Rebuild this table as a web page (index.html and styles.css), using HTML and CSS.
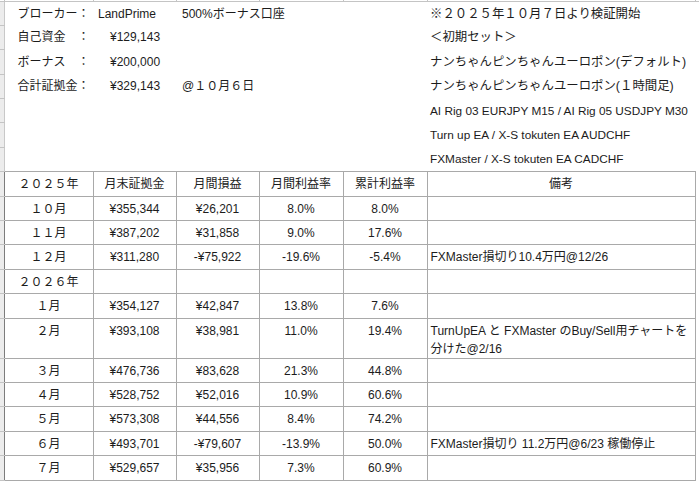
FILE: index.html
```html
<!DOCTYPE html>
<html lang="ja">
<head>
<meta charset="utf-8">
<title>検証記録</title>
<link rel="stylesheet" href="styles.css">
</head>
<body>
<table class="sheet">
  <colgroup>
    <col class="c-a"><col class="c-b"><col class="c-c"><col class="c-d"><col class="c-e"><col class="c-f"><col class="c-g"><col class="c-h">
  </colgroup>
  <tr class="r-top"><td class="a"></td><td></td><td></td><td></td><td></td><td></td><td></td><td class="h"></td></tr>
  <tr class="r-info"><td class="a"></td><td class="lbl">ブローカー：</td><td class="v1">LandPrime</td><td class="v2">500%ボーナス口座</td><td></td><td></td><td class="note">※２０２５年１０月７日より検証開始</td><td class="h"></td></tr>
  <tr class="r-info"><td class="a"></td><td class="lbl">自己資金　：</td><td class="v3">¥129,143</td><td></td><td></td><td></td><td class="note">＜初期セット＞</td><td class="h"></td></tr>
  <tr class="r-info"><td class="a"></td><td class="lbl">ボーナス　：</td><td class="v3">¥200,000</td><td></td><td></td><td></td><td class="note">ナンちゃんピンちゃんユーロポン(デフォルト)</td><td class="h"></td></tr>
  <tr class="r-info"><td class="a"></td><td class="lbl">合計証拠金：</td><td class="v3">¥329,143</td><td class="v2">@１０月６日</td><td></td><td></td><td class="note">ナンちゃんピンちゃんユーロポン(１時間足)</td><td class="h"></td></tr>
  <tr class="r-info"><td class="a"></td><td></td><td></td><td></td><td></td><td></td><td class="note latin">AI Rig 03 EURJPY M15 / AI Rig 05 USDJPY M30</td><td class="h"></td></tr>
  <tr class="r-info"><td class="a"></td><td></td><td></td><td></td><td></td><td></td><td class="note latin">Turn up EA / X-S tokuten EA AUDCHF</td><td class="h"></td></tr>
  <tr class="r-info"><td class="a"></td><td></td><td></td><td></td><td></td><td></td><td class="note latin">FXMaster / X-S tokuten EA CADCHF</td><td class="h"></td></tr>

  <tr class="r-data"><td class="a"></td><td class="d">２０２５年</td><td class="d">月末証拠金</td><td class="d">月間損益</td><td class="d">月間利益率</td><td class="d">累計利益率</td><td class="d">備考</td><td class="h"></td></tr>
  <tr class="r-data"><td class="a"></td><td class="d">１０月</td><td class="d">¥355,344</td><td class="d">¥26,201</td><td class="d">8.0%</td><td class="d">8.0%</td><td class="d memo"></td><td class="h"></td></tr>
  <tr class="r-data"><td class="a"></td><td class="d">１１月</td><td class="d">¥387,202</td><td class="d">¥31,858</td><td class="d">9.0%</td><td class="d">17.6%</td><td class="d memo"></td><td class="h"></td></tr>
  <tr class="r-data"><td class="a"></td><td class="d">１２月</td><td class="d">¥311,280</td><td class="d">-¥75,922</td><td class="d">-19.6%</td><td class="d">-5.4%</td><td class="d memo">FXMaster損切り10.4万円@12/26</td><td class="h"></td></tr>
  <tr class="r-data"><td class="a"></td><td class="d">２０２６年</td><td class="d"></td><td class="d"></td><td class="d"></td><td class="d"></td><td class="d memo"></td><td class="h"></td></tr>
  <tr class="r-data"><td class="a"></td><td class="d">１月</td><td class="d">¥354,127</td><td class="d">¥42,847</td><td class="d">13.8%</td><td class="d">7.6%</td><td class="d memo"></td><td class="h"></td></tr>
  <tr class="r-data r-tall"><td class="a"></td><td class="d">２月</td><td class="d">¥393,108</td><td class="d">¥38,981</td><td class="d">11.0%</td><td class="d">19.4%</td><td class="d memo">TurnUpEA と FXMaster のBuy/Sell用チャートを<br>分けた@2/16</td><td class="h"></td></tr>
  <tr class="r-data"><td class="a"></td><td class="d">３月</td><td class="d">¥476,736</td><td class="d">¥83,628</td><td class="d">21.3%</td><td class="d">44.8%</td><td class="d memo"></td><td class="h"></td></tr>
  <tr class="r-data"><td class="a"></td><td class="d">４月</td><td class="d">¥528,752</td><td class="d">¥52,016</td><td class="d">10.9%</td><td class="d">60.6%</td><td class="d memo"></td><td class="h"></td></tr>
  <tr class="r-data"><td class="a"></td><td class="d">５月</td><td class="d">¥573,308</td><td class="d">¥44,556</td><td class="d">8.4%</td><td class="d">74.2%</td><td class="d memo"></td><td class="h"></td></tr>
  <tr class="r-data"><td class="a"></td><td class="d">６月</td><td class="d">¥493,701</td><td class="d">-¥79,607</td><td class="d">-13.9%</td><td class="d">50.0%</td><td class="d memo">FXMaster損切り 11.2万円@6/23 稼働停止</td><td class="h"></td></tr>
  <tr class="r-data"><td class="a"></td><td class="d">７月</td><td class="d">¥529,657</td><td class="d">¥35,956</td><td class="d">7.3%</td><td class="d">60.9%</td><td class="d memo"></td><td class="h"></td></tr>
  <tr class="r-data"><td class="a"></td><td class="d"></td><td class="d"></td><td class="d"></td><td class="d"></td><td class="d"></td><td class="d memo"></td><td class="h"></td></tr>
</table>
</body>
</html>
```

FILE: styles.css
```css
html, body {
  margin: 0;
  padding: 0;
  background: #ffffff;
  overflow: hidden;
}

body {
  font-family: "Liberation Sans", "Noto Sans CJK JP", sans-serif;
  font-size: 12px;
  color: #1c1c1c;
}

.sheet {
  border-collapse: collapse;
  table-layout: fixed;
  width: 699px;
}

.c-a { width: 4px; }
.c-b { width: 89px; }
.c-c { width: 83px; }
.c-d { width: 83px; }
.c-e { width: 84px; }
.c-f { width: 84px; }
.c-g { width: 268px; }
.c-h { width: 4px; }

.sheet td {
  padding: 0;
  white-space: nowrap;
  overflow: visible;
  vertical-align: top;
  line-height: 18px;
}

/* first partial row */
.r-top { height: 1px; }
.r-top td {
  border-bottom: 1px solid #c4c4c4;
  border-right: 1px solid #c4c4c4;
}
.r-top td.h { border-right: none; }

/* info rows */
.r-info { height: 24.4px; }
.r-info td { padding-top: 3px; }
.r-info td.a {
  background: #ececec;
  border-right: 1px solid #c8c8c8;
  border-bottom: 1px solid #c4c4c4;
}

.lbl { padding-left: 13px !important; }
.v1 { padding-left: 5px !important; }
.v2 { padding-left: 6px !important; }
.v3 { padding-left: 17px !important; }
.note { padding-left: 3px !important; font-size: 12.4px; }
.note.latin { font-size: 11.8px; }

/* data rows */
.r-data { height: 24.4px; }
.r-tall { height: 39px; }
.r-data td.a {
  background: #ececec;
  border-right: 1px solid #7c7c7c;
  border-bottom: 1px solid #c4c4c4;
  border-top: 1px solid #a9a9a9;
}
.r-data td.d {
  border: 1px solid #a9a9a9;
  text-align: center;
  padding-top: 3px;
}
.r-data td.memo {
  text-align: left;
  padding-left: 3px;
}
```
